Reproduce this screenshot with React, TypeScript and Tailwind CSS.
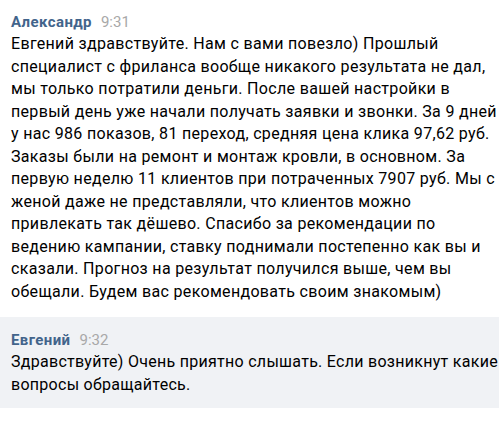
export default function App() {
  return (
    <div className="w-[502px] h-[442px] bg-white text-black" style={{ fontFamily: "Roboto, 'Noto Sans', sans-serif" }}>
      <div className="pt-[11px] pl-[11px] pb-[14px]">
        <div className="flex items-baseline gap-[9px] text-[15px] leading-[22px]">
          <span className="font-bold text-[#42648b] tracking-[0.4px]">Александр</span>
          <span className="text-[#a8a8a8]">9:31</span>
        </div>
        <p className="w-[489px] text-[16px] leading-[22.5px] tracking-[0.32px]">
          Евгений здравствуйте. Нам с вами повезло) Прошлый специалист с фриланса вообще никакого результата не дал, мы только потратили деньги. После вашей настройки в первый день уже начали получать заявки и звонки. За 9 дней у нас 986 показов, 81 переход, средняя цена клика 97,62 руб. Заказы были на ремонт и монтаж кровли, в основном. За первую неделю 11 клиентов при потраченных 7907 руб. Мы с женой даже не представляли, что клиентов можно привлекать так дёшево. Спасибо за рекомендации по ведению кампании, ставку поднимали постепенно как вы и сказали. Прогноз на результат получился выше, чем вы обещали. Будем вас рекомендовать своим знакомым)
        </p>
      </div>
      <div className="w-[499px] bg-[#f0f2f5] pt-[12px] pl-[11px] pb-[12px]">
        <div className="flex items-baseline gap-[9px] text-[15px] leading-[22px]">
          <span className="font-bold text-[#42648b] tracking-[0.4px]">Евгений</span>
          <span className="text-[#a8a8a8]">9:32</span>
        </div>
        <p className="w-[488px] text-[16px] leading-[22.5px] tracking-[0.28px]">
          Здравствуйте) Очень приятно слышать. Если возникнут какие вопросы обращайтесь.
        </p>
      </div>
    </div>
  );
}
